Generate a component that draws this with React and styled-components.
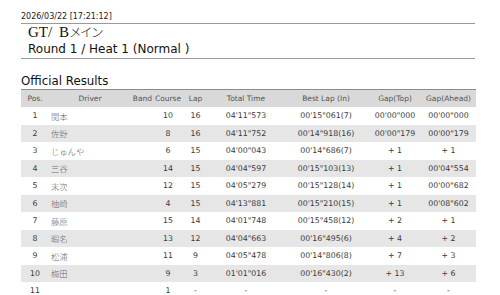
import React from "react";
import styled, { createGlobalStyle } from "styled-components";

const GlobalStyle = createGlobalStyle`
  body {
    margin: 0;
    background: #ffffff;
    font-family: "DejaVu Sans", Verdana, sans-serif;
    color: #333;
  }
`;

const results = [
  { pos: 1, driver: "関本", course: 10, lap: 16, total: "04'11\"573", best: "00'15\"061(7)", top: "00'00\"000", ahead: "00'00\"000" },
  { pos: 2, driver: "佐野", course: 8, lap: 16, total: "04'11\"752", best: "00'14\"918(16)", top: "00'00\"179", ahead: "00'00\"179" },
  { pos: 3, driver: "じゅんや", course: 6, lap: 15, total: "04'00\"043", best: "00'14\"686(7)", top: "+ 1", ahead: "+ 1" },
  { pos: 4, driver: "三谷", course: 14, lap: 15, total: "04'04\"597", best: "00'15\"103(13)", top: "+ 1", ahead: "00'04\"554" },
  { pos: 5, driver: "末次", course: 12, lap: 15, total: "04'05\"279", best: "00'15\"128(14)", top: "+ 1", ahead: "00'00\"682" },
  { pos: 6, driver: "柚崎", course: 4, lap: 15, total: "04'13\"881", best: "00'15\"210(15)", top: "+ 1", ahead: "00'08\"602" },
  { pos: 7, driver: "藤原", course: 15, lap: 14, total: "04'01\"748", best: "00'15\"458(12)", top: "+ 2", ahead: "+ 1" },
  { pos: 8, driver: "暇名", course: 13, lap: 12, total: "04'04\"663", best: "00'16\"495(6)", top: "+ 4", ahead: "+ 2" },
  { pos: 9, driver: "松浦", course: 11, lap: 9, total: "04'05\"478", best: "00'14\"806(8)", top: "+ 7", ahead: "+ 3" },
  { pos: 10, driver: "梅田", course: 9, lap: 3, total: "01'01\"016", best: "00'16\"430(2)", top: "+ 13", ahead: "+ 6" },
  { pos: 11, driver: "", course: 1, lap: "-", total: "-", best: "-", top: "-", ahead: "-" },
];

const columns = [
  { key: "pos", label: "Pos.", width: 28 },
  { key: "driver", label: "Driver", width: 82 },
  { key: "band", label: "Band", width: 23 },
  { key: "course", label: "Course", width: 28 },
  { key: "lap", label: "Lap", width: 27 },
  { key: "total", label: "Total Time", width: 74 },
  { key: "best", label: "Best Lap (In)", width: 86 },
  { key: "top", label: "Gap(Top)", width: 52 },
  { key: "ahead", label: "Gap(Ahead)", width: 55 },
];

export default function App() {
  return (
    <>
      <GlobalStyle />
      <Page>
        <DateLine>2026/03/22 [17:21:12]</DateLine>
        <TitleBlock>
          <EventName>
            GT/ B<Kana>メイン</Kana>
          </EventName>
          <HeatName>Round 1 / Heat 1 (Normal )</HeatName>
        </TitleBlock>
        <SectionTitle>Official Results</SectionTitle>
        <ResultTable>
          <colgroup>
            {columns.map((c) => (
              <col key={c.key} style={{ width: c.width }} />
            ))}
          </colgroup>
          <thead>
            <tr>
              {columns.map((c) => (
                <HeadCell key={c.key}>{c.label}</HeadCell>
              ))}
            </tr>
          </thead>
          <tbody>
            {results.map((r, i) => (
              <Row key={r.pos} $alt={i % 2 === 1}>
                <Cell>{r.pos}</Cell>
                <DriverCell>{r.driver}</DriverCell>
                <Cell />
                <Cell>{r.course}</Cell>
                <Cell>{r.lap}</Cell>
                <Cell>{r.total}</Cell>
                <Cell>{r.best}</Cell>
                <Cell>{r.top}</Cell>
                <Cell>{r.ahead}</Cell>
              </Row>
            ))}
          </tbody>
        </ResultTable>
      </Page>
    </>
  );
}

const Page = styled.div`
  width: 454px;
  padding: 12px 0 0 21px;
`;

const DateLine = styled.div`
  font-size: 8px;
  line-height: 10px;
  padding-bottom: 1px;
  color: #222;
  border-bottom: 1px solid #9a9a9a;
`;

const TitleBlock = styled.div`
  padding-left: 7px;
  border-bottom: 1px solid #9a9a9a;
`;

const EventName = styled.div`
  height: 17px;
  font-family: "Liberation Serif", "Noto Sans CJK JP", serif;
  font-size: 15px;
  line-height: 17px;
  word-spacing: 3px;
  color: #111;
`;

const Kana = styled.span`
  font-family: "Noto Sans CJK JP", sans-serif;
  font-size: 12.5px;
  line-height: 10px;
  font-weight: 300;
  letter-spacing: -1.5px;
`;

const HeatName = styled.div`
  font-size: 12px;
  line-height: 17px;
  color: #111;
`;

const SectionTitle = styled.div`
  margin-top: 14px;
  font-size: 11.8px;
  line-height: 16px;
  color: #111;
`;

const ResultTable = styled.table`
  width: 454px;
  table-layout: fixed;
  border-collapse: collapse;
  font-size: 7.8px;
`;

const HeadCell = styled.th`
  height: 17px;
  padding: 0;
  font-size: 7.5px;
  font-weight: normal;
  text-align: center;
  color: #555;
  background: #d9d9d9;
  border-top: 1px solid #8c8c8c;
  white-space: nowrap;
`;

const Row = styled.tr`
  height: 17.5px;
  background: ${(p) => (p.$alt ? "#e6e6e6" : "#ffffff")};
`;

const Cell = styled.td`
  padding: 0;
  text-align: center;
  color: #3a3a3a;
  white-space: nowrap;
`;

const DriverCell = styled(Cell)`
  text-align: left;
  padding-left: 2px;
  font-family: "Noto Sans CJK JP", sans-serif;
  font-size: 8.3px;
  font-weight: 300;
  color: #666;
`;
